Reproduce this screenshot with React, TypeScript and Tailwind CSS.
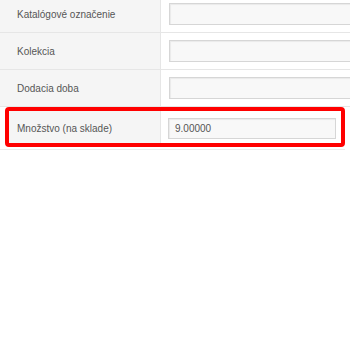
const rows = ["Katalógové označenie", "Kolekcia", "Dodacia doba"];

const Row = ({ label }: { label: string }) => (
  <div className="flex h-[37px] border-b border-[#e6e6e6]">
    <div className="flex w-[161px] shrink-0 items-center border-r border-[#e6e6e6] bg-[#f5f5f5] pl-[17px] text-[#555]">
      {label}
    </div>
    <div className="flex flex-1 items-center pl-[8px]">
      <div className="h-[22px] w-[200px] border border-[#d6d6d6] bg-[#f8f8f8] shadow-[inset_1px_1px_1px_rgba(0,0,0,0.06)]" />
    </div>
  </div>
);

export default function App() {
  return (
    <div className="h-[350px] w-[350px] overflow-hidden bg-white font-['Liberation_Sans',Arial,sans-serif] text-[10px]">
      <div className="-mt-[4px]">
        {rows.map((r) => (
          <Row key={r} label={r} />
        ))}
      </div>
      <div className="mx-[5px] h-[40px] w-[340px] rounded-[4px] border-[4px] border-[#ff0000]">
        <div className="flex h-full">
          <div className="flex w-[152px] shrink-0 items-center border-r border-[#e6e6e6] bg-[#f5f5f5] pt-[2px] pl-[8px] text-[#555]">
            Množstvo (na sklade)
          </div>
          <div className="flex flex-1 items-center pl-[7px] pr-[5px] pt-[2px]">
            <div className="flex h-[21px] w-full items-center border border-[#d6d6d6] bg-[#f8f8f8] pl-[6px] text-[#555] shadow-[inset_1px_1px_1px_rgba(0,0,0,0.06)]">
              9.00000
            </div>
          </div>
        </div>
      </div>
      <div className="mt-[2px] h-px w-[345px] bg-[#ececec]" />
    </div>
  );
}
